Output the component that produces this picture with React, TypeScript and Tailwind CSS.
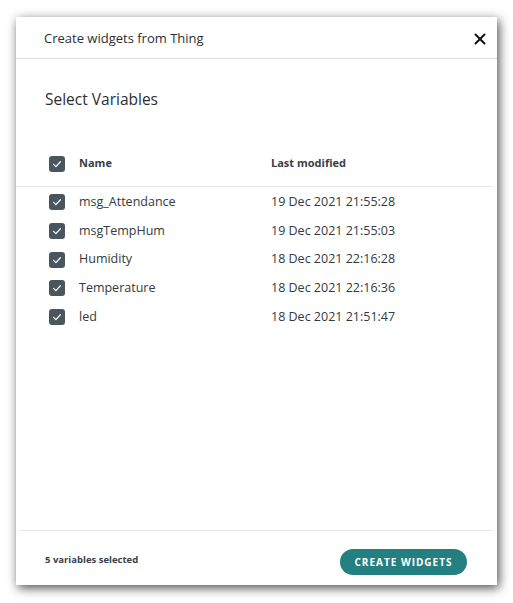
import React from 'react';

const rows = [
  { name: 'msg_Attendance', modified: '19 Dec 2021 21:55:28' },
  { name: 'msgTempHum', modified: '19 Dec 2021 21:55:03' },
  { name: 'Humidity', modified: '18 Dec 2021 22:16:28' },
  { name: 'Temperature', modified: '18 Dec 2021 22:16:36' },
  { name: 'led', modified: '18 Dec 2021 21:51:47' },
];

function Checkbox() {
  return (
    <div className="flex size-4 shrink-0 items-center justify-center rounded-[3px] bg-[#4a555e]">
      <svg viewBox="0 0 16 16" className="size-3" fill="none" stroke="#ffffff" strokeWidth="1.6" strokeLinecap="round" strokeLinejoin="round">
        <path d="M3.5 8.5l3 3 6-6.5" />
      </svg>
    </div>
  );
}

export default function App() {
  return (
    <div className="min-h-[603px] w-[513px] bg-white pl-4 pt-[17px] font-['Open_Sans',sans-serif] text-[#333a40]">
      <div className="flex h-[568px] w-[481px] flex-col bg-white shadow-[2px_3px_10px_rgba(0,0,0,0.7)]">
        <div className="flex h-[42px] shrink-0 items-center justify-between border-b border-[#dedede] pl-7 pr-[9px] pt-[2px]">
          <span className="text-[13px] text-[#2b2f33]">Create widgets from Thing</span>
          <svg viewBox="0 0 16 16" className="size-4" fill="none" stroke="#111" strokeWidth="2" strokeLinecap="round">
            <path d="M3.5 3.5l9 9M12.5 3.5l-9 9" />
          </svg>
        </div>

        <div className="flex-1">
          <h2 className="ml-[29px] mt-7 text-[15.5px] leading-6 text-[#2b2f33]">Select Variables</h2>

          <div className="mt-7 mr-1 flex h-[48px] items-center border-b border-[#e6e6e6] pl-[33px] pt-[2px]">
            <Checkbox />
            <span className="ml-[14px] w-[192px] text-[11px] font-bold text-[#3a4046]">Name</span>
            <span className="text-[11px] font-bold text-[#3a4046]">Last modified</span>
          </div>

          <div className="pt-px">
            {rows.map((r) => (
              <div key={r.name} className="flex h-[28.7px] items-center pl-[33px] text-[12.5px]">
                <Checkbox />
                <span className="ml-[14px] w-[192px]">{r.name}</span>
                <span>{r.modified}</span>
              </div>
            ))}
          </div>
        </div>

        <div className="ml-[3px] mr-1 flex h-[55px] shrink-0 items-center justify-between border-t border-[#e6e6e6] pl-[26px] pr-[26px] pt-[4px]">
          <span className="text-[9.5px] font-bold text-[#3a4046]">5 variables selected</span>
          <button className="mt-1 flex h-[26px] w-[127px] items-center justify-center rounded-full bg-[#247f80] text-[10px] font-bold tracking-[0.1em] text-white">
            CREATE WIDGETS
          </button>
        </div>
      </div>
    </div>
  );
}
